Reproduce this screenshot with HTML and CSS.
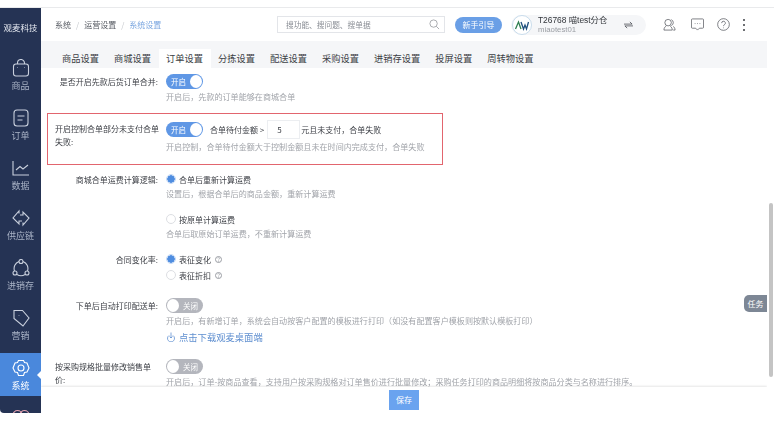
FILE: index.html
```html
<!DOCTYPE html>
<html>
  <head>
    <meta charset="UTF-8" />
    <meta name="viewport" content="width=device-width, initial-scale=1.0" />
    <title>系统设置</title>
    <link rel="stylesheet" href="styles.css">
  </head>

  <body>
    <div class="app">
      <div class="sidebar">
        <div class="logo">观麦科技</div>
        <div class="nav-item">
          <svg class="nav-icon" viewBox="0 0 18 18"><path d="M5.500 5V4a3.500 3.500 0 0 1 7 0v1"/><rect x="1.500" y="5" width="15" height="12" rx="2.500"/><path d="M5.500 8.500v.5M12.500 8.500v.5"/></svg>
          <span>商品</span>
        </div>
        <div class="nav-item">
          <svg class="nav-icon" viewBox="0 0 18 18"><rect x="2" y="1" width="14" height="16" rx="3"/><path d="M5.500 7h7M5.500 11h5"/></svg>
          <span>订单</span>
        </div>
        <div class="nav-item">
          <svg class="nav-icon" viewBox="0 0 18 18"><path d="M1 2v14h16"/><path d="M4 11l4-3.500 3 2.500 5-4"/></svg>
          <span>数据</span>
        </div>
        <div class="nav-item">
          <svg class="nav-icon" viewBox="0 0 18 18"><path d="M7 4.500V2L1 9l6 6v-3h3"/><path d="M11 13.500V16l6-7-6-6v3H8"/></svg>
          <span>供应链</span>
        </div>
        <div class="nav-item">
          <svg class="nav-icon" viewBox="0 0 18 18"><path d="M7 2.500A7.500 7.500 0 0 0 2.500 12M5 15.500a7.500 7.500 0 0 0 8 0M15.500 12A7.500 7.500 0 0 0 11 2.500"/><circle cx="9" cy="2.500" r="2"/><circle cx="3" cy="14" r="2"/><circle cx="15" cy="14" r="2"/></svg>
          <span>进销存</span>
        </div>
        <div class="nav-item">
          <svg class="nav-icon" viewBox="0 0 18 18"><path d="M2 1.500h8.500L17 9l-6 8-9-7.500z"/><path d="M7 6v.5"/></svg>
          <span>营销</span>
        </div>
        <div class="nav-item active">
          <svg class="nav-icon" viewBox="0 0 18 18"><path d="M6.500 1.500h5l1 2 2.500.5 2 5-2 4-2.500.5-1 3h-5l-1-3-2.500-.5-2-4 2-5 2.500-.5z"/><circle cx="9" cy="9" r="3"/></svg>
          <span>系统</span>
        </div>
        <div class="nav-item">
          <svg class="nav-icon pink" viewBox="0 0 18 18"><circle cx="5.500" cy="6" r="4.500"/><circle cx="12.500" cy="6" r="4.500"/></svg>
        </div>
      </div>

      <div class="main">
        <div class="header">
          <div class="crumbs">
            <span>系统</span><i>/</i><span>运营设置</span><i>/</i><span class="crumb-now">系统设置</span>
          </div>
          <div class="search">
            <span>搜功能、搜问题、搜单据</span>
            <svg class="search-icon" viewBox="0 0 12 12"><circle cx="5" cy="5" r="4"/><path d="M8 8l3 3"/></svg>
          </div>
          <div class="guide-btn">新手引导</div>
          <div class="user">
            <svg class="avatar" viewBox="0 0 20 20"><circle cx="10" cy="10" r="9.500"/><path class="av-a" d="M3.500 14l3-7 2.500 7"/><path class="av-v" d="M9 7l2.500 7 1.500-4 1.500 4 2-7"/></svg>
            <div class="user-text">
              <div class="user-name">T26768 喵test分仓</div>
              <div class="user-id">miaotest01</div>
            </div>
            <svg class="swap" viewBox="0 0 10 8"><path d="M0 3h9L6.500.5M10 5H1l2.500 2.500"/></svg>
          </div>
          <svg class="head-icon" viewBox="0 0 14 14"><circle cx="5.500" cy="5" r="3.500"/><path d="M1 13c0-3 2-4 2.500-4.500M10 13c0-3-2-4-2.500-4.500M1 13h9"/><path d="M9 1.800a3.500 3.500 0 0 1 0 6.400M11 9c1 .8 2 2 2 4h-2"/></svg>
          <svg class="head-icon head-chat" viewBox="0 0 14 14"><path d="M1.500 1h11a1 1 0 0 1 1 1v8a1 1 0 0 1-1 1H9l-2 2-2-2H1.500a1 1 0 0 1-1-1V2a1 1 0 0 1 1-1z"/><path d="M4 6h.8M6.600 6h.8M9.200 6h.8"/></svg>
          <svg class="head-icon head-help" viewBox="0 0 14 14"><circle cx="7" cy="7" r="6.300"/><path d="M5 5.500a2 2 0 1 1 3 1.700c-.7.400-1 .8-1 1.600M7 10.300v.7"/></svg>
          <div class="dots"><b></b><b></b><b></b></div>
        </div>

        <div class="tabs">
          <div class="tab">商品设置</div>
          <div class="tab">商城设置</div>
          <div class="tab active">订单设置</div>
          <div class="tab">分拣设置</div>
          <div class="tab">配送设置</div>
          <div class="tab">采购设置</div>
          <div class="tab">进销存设置</div>
          <div class="tab">投屏设置</div>
          <div class="tab">周转物设置</div>
        </div>

        <div class="content">
          <div class="row row-first">
            <div class="label">是否开启先款后货订单合并:</div>
            <div class="control">
              <div class="line"><div class="switch on"><span>开启</span><i></i></div></div>
              <div class="help">开启后，先款的订单能够在商城合单</div>
            </div>
          </div>

          <div class="row row-marked">
            <div class="label">开启控制合单部分未支付合单失败:</div>
            <div class="control">
              <div class="line line-input">
                <div class="switch on"><span>开启</span><i></i></div>
                <span class="amount-text">合单待付金额 &gt;</span>
                <div class="amount">5</div>
                <span>元且未支付，合单失败</span>
              </div>
              <div class="help">开启控制，合单待付金额大于控制金额且未在时间内完成支付，合单失败</div>
            </div>
          </div>

          <div class="row row-freight">
            <div class="label">商城合单运费计算逻辑:</div>
            <div class="control">
              <div class="line"><i class="radio checked"></i>合单后重新计算运费</div>
              <div class="help help-small">设置后，根据合单后的商品金额，重新计算运费</div>
              <div class="line second"><i class="radio"></i>按原单计算运费</div>
              <div class="help help-small">合单后取原始订单运费，不重新计算运费</div>
            </div>
          </div>

          <div class="row row-rate">
            <div class="label">合同变化率:</div>
            <div class="control">
              <div class="line"><i class="radio checked"></i>表征变化<em class="tip">?</em></div>
              <div class="line"><i class="radio"></i>表征折扣<em class="tip">?</em></div>
            </div>
          </div>

          <div class="row row-print">
            <div class="label">下单后自动打印配送单:</div>
            <div class="control">
              <div class="line"><div class="switch"><i></i><span>关闭</span></div></div>
              <div class="help">开启后，有新增订单，系统会自动按客户配置的模板进行打印（如没有配置客户模板则按默认模板打印）</div>
              <div class="line link">
                <svg class="link-icon" viewBox="0 0 10 10"><path d="M3 3.500a3.500 3.500 0 1 0 4 0M5 .5v5.500M3.500 4.500L5 6l1.500-1.500"/></svg>点击下载观麦桌面端
              </div>
            </div>
          </div>

          <div class="row row-last">
            <div class="label">按采购规格批量修改销售单价:</div>
            <div class="control">
              <div class="line"><div class="switch"><i></i><span>关闭</span></div></div>
              <div class="help">开启后，订单-按商品查看，支持用户按采购规格对订单售价进行批量修改；采购任务打印的商品明细将按商品分类与名称进行排序。</div>
            </div>
          </div>
        </div>

        <div class="footer"><div class="save-btn">保存</div></div>
      </div>
    </div>
    <div class="task-tab">任务</div>
    <div class="scroll-thumb"></div>
  </body>
</html>
```

FILE: styles.css
```css
* {
  box-sizing: border-box;
}

body {
  margin: 0;
  padding-top: 7px;
  height: 421px;
  overflow: hidden;
  background: #fff;
  color: #3c3f45;
  font-family: "Noto Sans CJK SC", "Liberation Sans", sans-serif;
  font-size: 8px;
  filter: blur(0.3px);
}

.app {
  display: flex;
  height: 406px;
  border-top: 1px solid #e9eaec;
}

.sidebar {
  width: 41px;
  flex-shrink: 0;
  display: flex;
  flex-direction: column;
  gap: 7px;
  overflow: hidden;
  background: #253354;
  border-bottom-left-radius: 4px;
}

.logo {
  height: 38px;
  flex-shrink: 0;
  padding-top: 12px;
  text-align: center;
  color: #e4e8f0;
  font-size: 8.500px;
  line-height: 14px;
}

.nav-item {
  position: relative;
  height: 43px;
  flex-shrink: 0;
  display: flex;
  flex-direction: column;
  align-items: center;
  padding-top: 6px;
  gap: 3px;
  color: #a9b3c6;
  font-size: 9px;
  line-height: 12px;
}

.nav-item.active {
  background: #4a88dc;
  color: #fff;
}

.nav-item.active::after {
  content: "";
  position: absolute;
  right: 0;
  top: 18px;
  border: 4px solid transparent;
  border-right-color: #fff;
}

.nav-icon {
  width: 18px;
  height: 18px;
  fill: none;
  stroke: #c9d0dd;
  stroke-width: 1.1;
}

.nav-item.active .nav-icon {
  stroke: #fff;
}

.nav-icon.pink {
  stroke: #e0a0ae;
}

.main {
  flex: 1;
  min-width: 0;
  margin-right: 7px;
  display: flex;
  flex-direction: column;
}

.header {
  height: 33px;
  flex-shrink: 0;
  display: flex;
  align-items: center;
  padding-right: 22px;
}

.crumbs {
  flex: 1;
  padding-left: 14px;
  display: flex;
  align-items: center;
  color: #565a62;
  font-size: 8px;
}

.crumbs i {
  margin: 0 5px;
  font-style: normal;
  color: #c4c7cc;
}

.crumb-now {
  color: #7aa6e0;
}

.search {
  width: 168px;
  height: 17px;
  display: flex;
  align-items: center;
  justify-content: space-between;
  padding: 0 4px 0 8px;
  border: 1px solid #e3e5e9;
  color: #8a8e95;
  font-size: 7.700px;
}

.search-icon {
  width: 11px;
  height: 11px;
  fill: none;
  stroke: #8d9096;
  stroke-width: 0.8;
}

.guide-btn {
  width: 47px;
  height: 16px;
  margin-left: 10px;
  border-radius: 8px;
  background: #6a9fe6;
  color: #fff;
  text-align: center;
  font-size: 8px;
  line-height: 16px;
}

.user {
  width: 135px;
  height: 20px;
  margin: 0 17px 0 9px;
  display: flex;
  align-items: center;
  border-radius: 10px;
  background: #f5f6f8;
}

.avatar {
  width: 20px;
  height: 20px;
  flex-shrink: 0;
  margin-left: 1px;
  fill: #fff;
  stroke: #a8c8e0;
  stroke-width: 0.6;
}

.avatar path {
  fill: none;
  stroke-width: 1.3;
}

.av-a {
  stroke: #2f7f52;
}

.av-v {
  stroke: #20507e;
}

.user-text {
  flex: 1;
  margin-left: 6px;
  font-family: "Liberation Sans", "Noto Sans CJK SC", sans-serif;
}

.user-name {
  height: 10px;
  color: #33363b;
  font-size: 8.400px;
  line-height: 10px;
}

.user-id {
  height: 9px;
  color: #9a9da3;
  font-size: 7.800px;
  line-height: 9px;
}

.swap {
  width: 9px;
  height: 8px;
  margin-right: 13px;
  fill: none;
  stroke: #3c3f45;
  stroke-width: 0.8;
}

.head-icon {
  width: 13px;
  height: 13px;
  fill: none;
  stroke: #55585e;
  stroke-width: 0.8;
}

.head-chat {
  margin-left: 15px;
}

.head-help {
  margin-left: 13px;
}

.dots {
  margin-left: 13px;
  display: flex;
  flex-direction: column;
  gap: 3px;
}

.dots b {
  width: 2px;
  height: 2px;
  background: #3c3f45;
  border-radius: 50%;
}

.tabs {
  height: 27px;
  flex-shrink: 0;
  display: flex;
  align-items: flex-end;
  padding-left: 13.500px;
  background: #f5f6f8;
}

.tab {
  height: 19px;
  padding: 0 7.500px;
  color: #3c3f45;
  font-size: 9.250px;
  line-height: 18px;
}

.tab.active {
  background: #fff;
}

.content {
  flex: 1;
  min-height: 0;
  overflow: hidden;
}

.row {
  display: flex;
  gap: 8px;
  padding-left: 6px;
}

.row-first {
  margin-top: 5px;
}

.row-marked {
  width: 396px;
  height: 52px;
  margin: 8px 0 0 6px;
  padding: 6px 0 0 7px;
  gap: 7px;
  border: 1px solid #e2656e;
}

.row-marked .label {
  width: 104px;
  text-align: left;
}

.row-freight {
  margin-top: 6px;
}

.row-rate {
  margin-top: 10px;
}

.row-print {
  margin-top: 14px;
}

.row-last {
  margin-top: 13px;
}

.row-last .label {
  padding-left: 8px;
  text-align: left;
}

.label {
  width: 111px;
  flex-shrink: 0;
  text-align: right;
  line-height: 13px;
  padding-top: 2px;
}

.control {
  flex: 1;
  min-width: 0;
}

.line {
  height: 16px;
  display: flex;
  align-items: center;
  white-space: nowrap;
}

.line-input {
  height: 19px;
}

.second {
  margin-top: 10px;
}

.help {
  color: #a1a4aa;
  font-size: 8.080px;
  line-height: 16px;
  white-space: nowrap;
}

.help-small {
  line-height: 14px;
}

.switch {
  width: 37px;
  height: 15px;
  padding: 0 1px;
  display: flex;
  align-items: center;
  justify-content: space-between;
  border-radius: 8px;
  background: #b4b6bd;
  color: #fff;
  font-size: 7.500px;
}

.switch span {
  margin: 0 4px;
}

.switch i {
  width: 13px;
  height: 13px;
  border-radius: 50%;
  background: #fff;
}

.switch.on {
  background: #5f97e5;
}

.amount-text {
  margin: 0 3px 0 7px;
}

.amount {
  width: 33px;
  height: 19px;
  margin-right: 1px;
  padding-left: 9px;
  border: 1px solid #eceef1;
  line-height: 17px;
}

.radio {
  width: 10px;
  height: 10px;
  margin-right: 3px;
  border: 1px solid #dcdee2;
  border-radius: 50%;
  background: #fff;
}

.radio.checked {
  border-color: #c5d9f4;
  background: radial-gradient(circle, #4f8de0 0 3.500px, #fff 4px);
}

.tip {
  width: 7px;
  height: 7px;
  margin-left: 4px;
  border: 0.6px solid #9a9da3;
  border-radius: 50%;
  color: #8a8e95;
  font-size: 5.500px;
  font-style: normal;
  line-height: 6px;
  text-align: center;
}

.link {
  color: #5f8fd0;
  font-size: 9.300px;
}

.link-icon {
  width: 10px;
  height: 10px;
  margin-right: 3px;
  fill: none;
  stroke: #5f8fd0;
  stroke-width: 0.8;
}

.footer {
  height: 26px;
  flex-shrink: 0;
  position: relative;
  display: flex;
  justify-content: center;
  padding-top: 3px;
  background: #fff;
  box-shadow: 0 -1px 2px rgba(0, 0, 0, 0.1);
  clip-path: inset(-3px 0 0 0);
}

.save-btn {
  width: 30px;
  height: 20px;
  background: #6aa3ef;
  color: #fff;
  text-align: center;
  line-height: 20px;
}

.task-tab {
  position: absolute;
  left: 744px;
  top: 295px;
  width: 23px;
  height: 17px;
  border-radius: 5px 0 0 5px;
  background: #7d8795;
  color: #fff;
  text-align: center;
  line-height: 17px;
}

.scroll-thumb {
  position: absolute;
  left: 769px;
  top: 203px;
  width: 4px;
  height: 174px;
  border-radius: 2px;
  background: #c4c4c4;
}
```
